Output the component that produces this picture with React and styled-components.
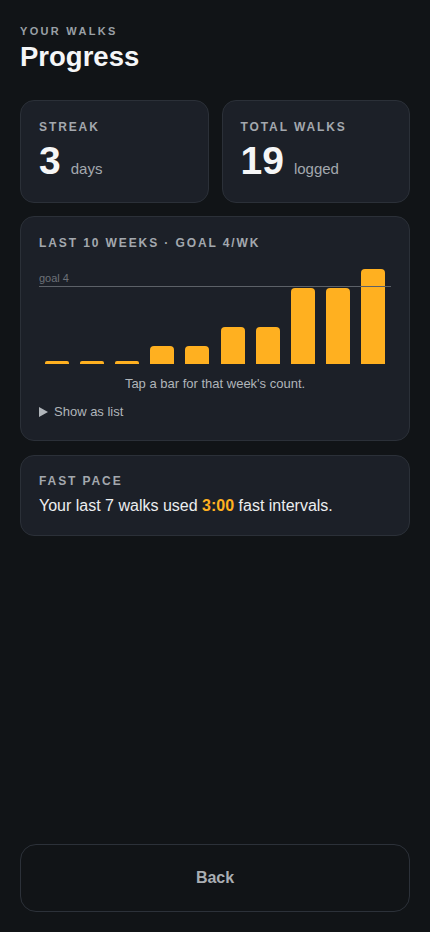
import React from "react";
import styled, { createGlobalStyle } from "styled-components";

const GlobalStyle = createGlobalStyle`
  html, body {
    margin: 0;
    padding: 0;
    background: #111417;
  }
  * { box-sizing: border-box; }
  body {
    font-family: "Liberation Sans", Arial, sans-serif;
    color: #e8eaed;
  }
`;

const Page = styled.div`
  min-height: 100vh;
  display: flex;
  flex-direction: column;
  padding: 25px 20px 20px;
`;

const Eyebrow = styled.div`
  font-size: 11px;
  font-weight: 700;
  letter-spacing: 2.3px;
  color: #9aa0a6;
  text-transform: uppercase;
`;

const Title = styled.h1`
  margin: 4px 0 0;
  font-size: 27.5px;
  font-weight: 700;
  color: #f5f6f7;
`;

const StatRow = styled.div`
  display: grid;
  grid-template-columns: 1fr 1fr;
  gap: 13px;
  margin-top: 27px;
`;

const Card = styled.div`
  background: #1c2028;
  border: 1px solid #2b3038;
  border-radius: 14px;
  padding: ${(p) => p.$pad || "19px 18px"};
  margin-top: ${(p) => p.$mt || "0"};
`;

const Label = styled.div`
  font-size: 12px;
  font-weight: 700;
  letter-spacing: 1.9px;
  color: #a3a8ae;
  text-transform: uppercase;
`;

const StatValue = styled.div`
  display: flex;
  align-items: baseline;
  gap: 10px;
  margin-top: 5px;
`;

const Big = styled.span`
  font-size: 39px;
  font-weight: 700;
  color: #f5f6f7;
`;

const Unit = styled.span`
  font-size: 15px;
  color: #a3a8ae;
`;

const Chart = styled.div`
  position: relative;
  height: 96px;
  margin-top: 18px;
  display: flex;
  align-items: flex-end;
`;

const GoalLine = styled.div`
  position: absolute;
  left: 0;
  right: 0;
  border-top: 1px solid #5c6168;
`;

const GoalText = styled.span`
  position: absolute;
  left: 0;
  bottom: 3px;
  font-size: 11px;
  color: #6c7178;
`;

const Col = styled.div`
  flex: 1;
  display: flex;
  justify-content: center;
  align-items: flex-end;
  height: 100%;
`;

const Bar = styled.div`
  width: 24px;
  background: #ffb020;
  border-radius: ${(p) => (p.$tiny ? "2px 2px 0 0" : "4px 4px 0 0")};
`;

const Hint = styled.div`
  text-align: center;
  font-size: 13px;
  color: #b0b5ba;
  margin-top: 12px;
`;

const Toggle = styled.div`
  display: flex;
  align-items: center;
  gap: 6px;
  margin-top: 13px;
  font-size: 13px;
  color: #b0b5ba;
  svg { display: block; }
`;

const PaceText = styled.div`
  margin-top: 9px;
  font-size: 16px;
  color: #eceef0;
`;

const Hl = styled.b`
  color: #ffb020;
`;

const BackButton = styled.button`
  margin-top: auto;
  height: 68px;
  width: 100%;
  background: transparent;
  border: 1px solid #2c3139;
  border-radius: 16px;
  font-family: inherit;
  font-size: 16px;
  font-weight: 700;
  color: #a9aeb3;
  cursor: pointer;
`;

const weeks = [0, 0, 0, 1, 1, 2, 2, 4, 4, 5];
const MAX = 5;
const GOAL = 4;

export default function App() {
  return (
    <>
      <GlobalStyle />
      <Page>
        <Eyebrow>Your walks</Eyebrow>
        <Title>Progress</Title>

        <StatRow>
          <Card>
            <Label>Streak</Label>
            <StatValue>
              <Big>3</Big>
              <Unit>days</Unit>
            </StatValue>
          </Card>
          <Card>
            <Label>Total walks</Label>
            <StatValue>
              <Big>19</Big>
              <Unit>logged</Unit>
            </StatValue>
          </Card>
        </StatRow>

        <Card $mt="13px" $pad="19px 18px 21px">
          <Label>Last 10 weeks · Goal 4/wk</Label>
          <Chart>
            <GoalLine style={{ bottom: `${(GOAL / MAX) * 96}px` }}>
              <GoalText>goal 4</GoalText>
            </GoalLine>
            {weeks.map((v, i) => (
              <Col key={i}>
                <Bar
                  $tiny={v === 0}
                  style={{ height: v === 0 ? "3px" : `${(v / MAX) * 96 - 1}px` }}
                />
              </Col>
            ))}
          </Chart>
          <Hint>Tap a bar for that week's count.</Hint>
          <Toggle>
            <svg width="9" height="10" viewBox="0 0 9 10">
              <path d="M0 0 L9 5 L0 10 Z" fill="#b0b5ba" />
            </svg>
            Show as list
          </Toggle>
        </Card>

        <Card $mt="14px" $pad="18px 18px 20px">
          <Label>Fast pace</Label>
          <PaceText>
            Your last 7 walks used <Hl>3:00</Hl> fast intervals.
          </PaceText>
        </Card>

        <BackButton>Back</BackButton>
      </Page>
    </>
  );
}
